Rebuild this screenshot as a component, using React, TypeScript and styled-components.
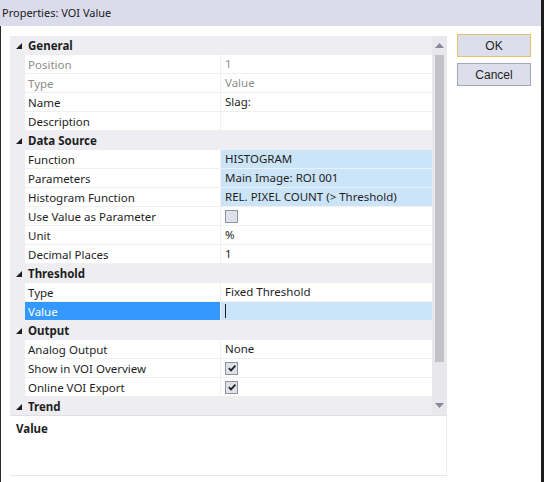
import React from "react";
import styled, { createGlobalStyle } from "styled-components";

const GlobalStyle = createGlobalStyle`
  html, body {
    margin: 0;
    padding: 0;
    background: #ffffff;
  }
  body {
    font-family: "Segoe UI", "Noto Sans", "Liberation Sans", sans-serif;
  }
`;

type Prop = {
  name: string;
  value?: string;
  muted?: boolean;
  highlight?: boolean;
  selected?: boolean;
  check?: "on" | "off";
  cursor?: boolean;
};

type Section = { title: string; rows: Prop[] };

const sections: Section[] = [
  {
    title: "General",
    rows: [
      { name: "Position", value: "1", muted: true },
      { name: "Type", value: "Value", muted: true },
      { name: "Name", value: "Slag:" },
      { name: "Description", value: "" },
    ],
  },
  {
    title: "Data Source",
    rows: [
      { name: "Function", value: "HISTOGRAM", highlight: true },
      { name: "Parameters", value: "Main Image: ROI 001", highlight: true },
      { name: "Histogram Function", value: "REL. PIXEL COUNT (> Threshold)", highlight: true },
      { name: "Use Value as Parameter", check: "off" },
      { name: "Unit", value: "%" },
      { name: "Decimal Places", value: "1" },
    ],
  },
  {
    title: "Threshold",
    rows: [
      { name: "Type", value: "Fixed Threshold" },
      { name: "Value", selected: true, cursor: true },
    ],
  },
  {
    title: "Output",
    rows: [
      { name: "Analog Output", value: "None" },
      { name: "Show in VOI Overview", check: "on" },
      { name: "Online VOI Export", check: "on" },
    ],
  },
  { title: "Trend", rows: [] },
];

export default function App() {
  return (
    <>
      <GlobalStyle />
      <Window>
        <TitleBar>Properties: VOI Value</TitleBar>
        <Body>
          <Panel>
            <GridArea>
              <Rows>
                {sections.map((s) => (
                  <React.Fragment key={s.title}>
                    <HeaderRow>
                      <Gutter>
                        <svg width="6" height="6" viewBox="0 0 6 6">
                          <polygon points="6,0 6,6 0,6" fill="#1e1e1e" />
                        </svg>
                      </Gutter>
                      <HeaderTitle>{s.title}</HeaderTitle>
                    </HeaderRow>
                    {s.rows.map((r) => (
                      <Row key={s.title + r.name}>
                        <Gutter />
                        <NameCell $muted={r.muted} $selected={r.selected}>
                          {r.name}
                        </NameCell>
                        <ValueCell $muted={r.muted} $highlight={r.highlight || r.selected}>
                          {r.check && (
                            <CheckBox>
                              {r.check === "on" && (
                                <svg width="10" height="10" viewBox="0 0 10 10">
                                  <path
                                    d="M1.8 5.2 L4 7.4 L8.4 2.6"
                                    fill="none"
                                    stroke="#1e1e1e"
                                    strokeWidth="1.7"
                                  />
                                </svg>
                              )}
                            </CheckBox>
                          )}
                          {r.cursor && <Caret />}
                          {r.value}
                        </ValueCell>
                      </Row>
                    ))}
                  </React.Fragment>
                ))}
              </Rows>
              <ScrollBar>
                <ScrollArrow>
                  <svg width="9" height="5" viewBox="0 0 9 5">
                    <polygon points="0,5 9,5 4.5,0" fill="#868999" />
                  </svg>
                </ScrollArrow>
                <Track>
                  <Thumb />
                </Track>
                <ScrollArrow>
                  <svg width="9" height="5" viewBox="0 0 9 5">
                    <polygon points="0,0 9,0 4.5,5" fill="#868999" />
                  </svg>
                </ScrollArrow>
              </ScrollBar>
            </GridArea>
            <Description>Value</Description>
          </Panel>
          <Buttons>
            <Button $default>OK</Button>
            <Button>Cancel</Button>
          </Buttons>
        </Body>
      </Window>
    </>
  );
}

const Window = styled.div`
  width: 544px;
  height: 482px;
  display: flex;
  flex-direction: column;
  box-sizing: border-box;
  border-right: 3px solid #1c1c1c;
  overflow: hidden;
`;

const TitleBar = styled.div`
  height: 26px;
  flex-shrink: 0;
  background: #dadcec;
  color: #1a1a1a;
  font-size: 11px;
  line-height: 26px;
  padding-left: 2px;
`;

const Body = styled.div`
  flex: 1;
  display: flex;
  border-left: 1px solid #2a2a2a;
  padding: 8px 0 0 9px;
  background: #ffffff;
`;

const Panel = styled.div`
  width: 437px;
  margin-top: 2px;
  height: 440px;
  display: flex;
  flex-direction: column;
`;

const GridArea = styled.div`
  height: 379px;
  display: flex;
  overflow: hidden;
`;

const Rows = styled.div`
  width: 422px;
  display: flex;
  flex-direction: column;
  overflow: hidden;
`;

const Row = styled.div`
  height: 19px;
  flex-shrink: 0;
  display: grid;
  grid-template-columns: 15px 196px 1fr;
  font-size: 11.5px;
  line-height: 20px;
  color: #1e1e1e;
`;

const HeaderRow = styled(Row)`
  background: #eeeef2;
  font-weight: 700;
`;

const Gutter = styled.div`
  background: #eeeef2;
  display: flex;
  align-items: center;
  justify-content: flex-end;
  padding-right: 3px;
`;

const HeaderTitle = styled.div`
  grid-column: 2 / 4;
  padding-left: 3px;
`;

const NameCell = styled.div<{ $muted?: boolean; $selected?: boolean }>`
  padding-left: 3px;
  border-right: 1px solid #f0f0f0;
  border-bottom: 1px solid #f0f0f0;
  white-space: nowrap;
  overflow: hidden;
  color: ${(p) => (p.$selected ? "#ffffff" : p.$muted ? "#8d8d8d" : "#1e1e1e")};
  background: ${(p) => (p.$selected ? "#3399ff" : "#ffffff")};
`;

const ValueCell = styled.div<{ $muted?: boolean; $highlight?: boolean }>`
  display: flex;
  align-items: center;
  padding-left: 4px;
  border-bottom: 1px solid #f0f0f0;
  white-space: nowrap;
  overflow: hidden;
  color: ${(p) => (p.$muted ? "#8d8d8d" : "#1e1e1e")};
  background: ${(p) => (p.$highlight ? "#cce4f7" : "#ffffff")};
`;

const CheckBox = styled.span`
  width: 11px;
  height: 11px;
  border: 1px solid #8e92a3;
  background: #dfe1ea;
  display: flex;
  align-items: center;
  justify-content: center;
`;

const Caret = styled.span`
  width: 1px;
  height: 14px;
  background: #1e1e1e;
`;

const ScrollBar = styled.div`
  width: 15px;
  background: #e8e8ec;
  display: flex;
  flex-direction: column;
  align-items: center;
`;

const ScrollArrow = styled.div`
  height: 19px;
  flex-shrink: 0;
  display: flex;
  align-items: center;
  justify-content: center;
`;

const Track = styled.div`
  flex: 1;
  display: flex;
  justify-content: center;
`;

const Thumb = styled.div`
  width: 9px;
  height: 307px;
  background: #c2c3c9;
`;

const Description = styled.div`
  flex: 1;
  border-top: 1px solid #e0e0e0;
  border-bottom: 1px solid #e6e6e6;
  border-right: 1px solid #eeeeee;
  padding: 5px 6px;
  font-size: 11.5px;
  font-weight: 700;
  color: #1e1e1e;
`;

const Buttons = styled.div`
  margin-left: 10px;
  display: flex;
  flex-direction: column;
  gap: 6px;
`;

const Button = styled.button<{ $default?: boolean }>`
  width: 74px;
  height: 23px;
  padding: 0;
  font-family: "Liberation Sans", Arial, sans-serif;
  font-size: 12px;
  color: #1e1e1e;
  background: #dcdeec;
  border: 1px solid ${(p) => (p.$default ? "#e5c365" : "#a2a6b8")};
`;
